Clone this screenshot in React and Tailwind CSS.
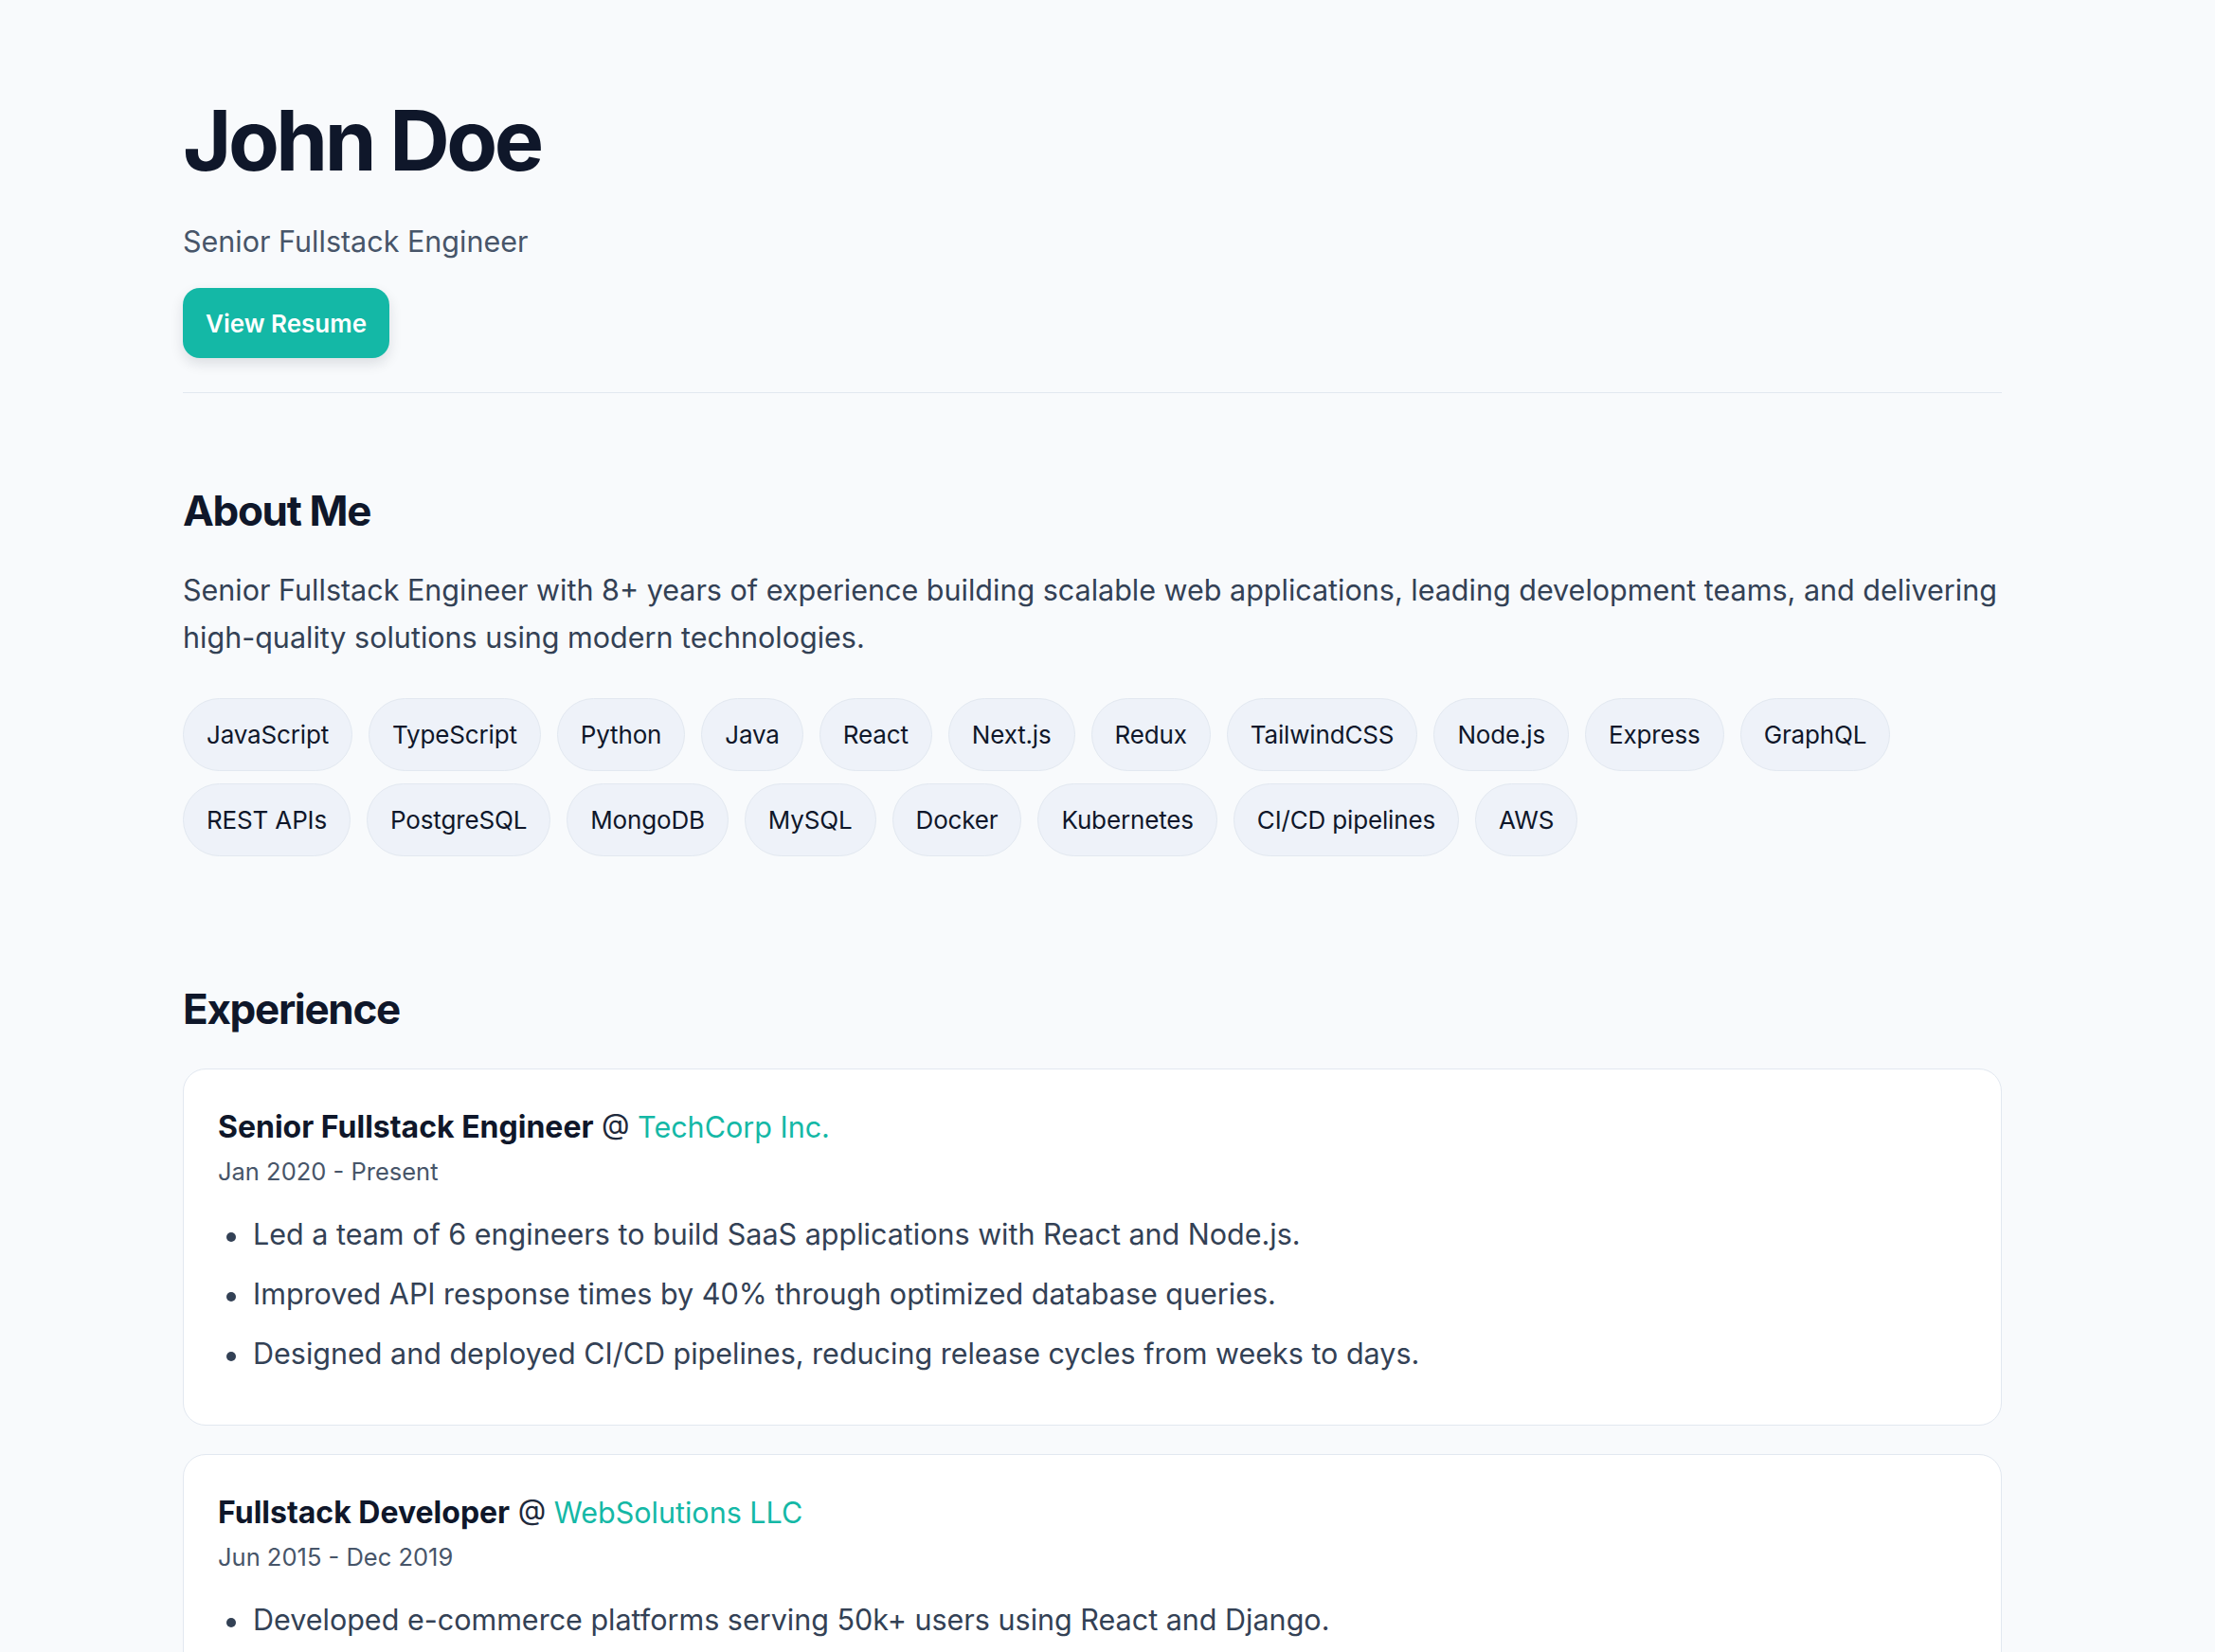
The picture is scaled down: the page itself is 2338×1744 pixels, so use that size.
import React from 'react'

const skills = [
  'JavaScript',
  'TypeScript',
  'Python',
  'Java',
  'React',
  'Next.js',
  'Redux',
  'TailwindCSS',
  'Node.js',
  'Express',
  'GraphQL',
  'REST APIs',
  'PostgreSQL',
  'MongoDB',
  'MySQL',
  'Docker',
  'Kubernetes',
  'CI/CD pipelines',
  'AWS'
]

const jobs = [
  {
    title: 'Senior Fullstack Engineer',
    company: 'TechCorp Inc.',
    period: 'Jan 2020 - Present',
    points: [
      'Led a team of 6 engineers to build SaaS applications with React and Node.js.',
      'Improved API response times by 40% through optimized database queries.',
      'Designed and deployed CI/CD pipelines, reducing release cycles from weeks to days.'
    ]
  },
  {
    title: 'Fullstack Developer',
    company: 'WebSolutions LLC',
    period: 'Jun 2015 - Dec 2019',
    points: [
      'Developed e-commerce platforms serving 50k+ users using React and Django.',
      'Built and maintained RESTful APIs consumed by web and mobile clients.',
      'Mentored junior developers and introduced code review practices.'
    ]
  }
]

const JobCard = ({ job }) => (
  <div className="rounded-[24px] border-[1.5px] border-[#e2e8f0] bg-white px-[36px] pt-[40px] pb-[54px]">
    {/* Title line */}
    <h3 className="text-[30.5px] leading-[42px] text-[#1e293b]">
      <span className="text-[32px] font-bold text-[#0f172a]">{job.title}</span>{' '}
      @ <span className="text-[#14b8a6]">{job.company}</span>
    </h3>
    <p className="mt-[8px] text-[25.5px] leading-[36px] text-[#475569]">{job.period}</p>

    {/* Bullets */}
    <ul className="mt-[27px] flex flex-col gap-[21px]">
      {job.points.map((point) => (
        <li key={point} className="flex items-start text-[30.5px] leading-[42px] text-[#334155]">
          <span className="mt-[19px] ml-[9px] mr-[18px] h-[10px] w-[10px] shrink-0 rounded-full bg-[#334155]"></span>
          <span>{point}</span>
        </li>
      ))}
    </ul>
  </div>
)

export default function App() {
  return (
    <div className="min-h-screen bg-[#f8fafc] font-['Inter',sans-serif] antialiased">
      <div className="ml-[193px] w-[1920px] pt-[104px] pb-[96px]">
        {/* Header */}
        <header className="border-b-[1.5px] border-[#e2e8f0] pb-[36px]">
          <h1 className="text-[88px] leading-[88px] font-bold tracking-[-0.04em] text-[#0f172a]">John Doe</h1>
          <p className="mt-[42px] text-[30.5px] leading-[42px] text-[#475569]">Senior Fullstack Engineer</p>
          <button className="mt-[28px] flex h-[74px] items-center rounded-[18px] bg-[#14b8a6] px-[24px] text-[26px] font-semibold text-white shadow-[0_6px_14px_rgba(15,23,42,0.12)]">
            View Resume
          </button>
        </header>

        {/* About */}
        <section className="pt-[97px]">
          <h2 className="text-[44px] leading-[54px] font-bold tracking-[-0.03em] text-[#0f172a]">About Me</h2>
          <p className="mt-[32px] text-[30.5px] leading-[50px] text-[#334155]">
            Senior Fullstack Engineer with 8+ years of experience building scalable web applications, leading development teams, and delivering high-quality solutions using modern technologies.
          </p>
          <div className="mt-[39px] flex flex-wrap gap-x-[17px] gap-y-[13px]">
            {skills.map((skill) => (
              <span
                key={skill}
                className="flex h-[77px] items-center rounded-full border-[1.5px] border-[#e2e8f0] bg-[#eef2f9] px-[24px] text-[26px] tracking-[-0.006em] text-[#0f172a]"
              >
                {skill}
              </span>
            ))}
          </div>
        </section>

        {/* Experience */}
        <section className="pt-[134px]">
          <h2 className="text-[44px] leading-[54px] font-bold tracking-[-0.03em] text-[#0f172a]">Experience</h2>
          <div className="mt-[36px] flex flex-col gap-[30px]">
            {jobs.map((job) => (
              <JobCard key={job.company} job={job} />
            ))}
          </div>
        </section>
      </div>
    </div>
  )
}
